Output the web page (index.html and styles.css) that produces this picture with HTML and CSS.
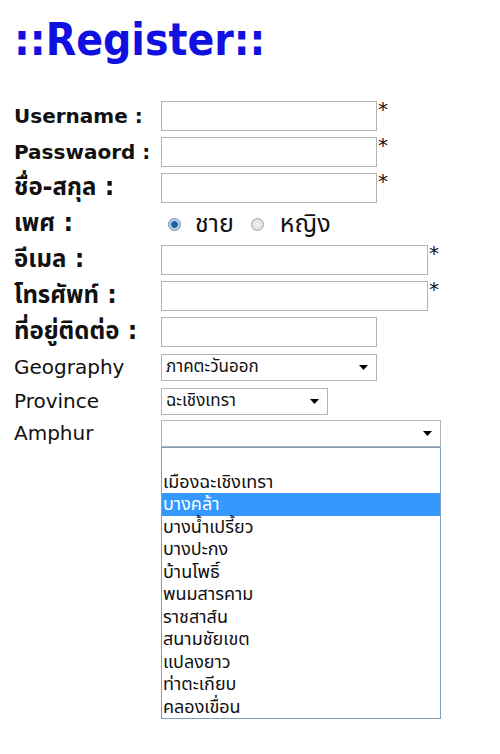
FILE: index.html
```html
<!DOCTYPE html>
<html lang="th">
<head>
  <meta charset="UTF-8">
  <meta name="viewport" content="width=device-width, initial-scale=1.0">
  <title>Register</title>
  <link rel="stylesheet" href="styles.css">
</head>
<body>
  <h1 class="title">::Register::</h1>

  <form class="register">
    <div class="row">
      <label class="label">Username :</label>
      <div class="field"><input type="text" class="text"><span class="req">*</span></div>
    </div>
    <div class="row">
      <label class="label">Passwaord :</label>
      <div class="field"><input type="password" class="text"><span class="req">*</span></div>
    </div>
    <div class="row">
      <label class="label thai">ชื่อ-สกุล :</label>
      <div class="field"><input type="text" class="text"><span class="req">*</span></div>
    </div>
    <div class="row">
      <label class="label thai">เพศ :</label>
      <div class="field radios">
        <input type="radio" name="sex" class="radio" checked><span class="choice">ชาย</span>
        <input type="radio" name="sex" class="radio"><span class="choice">หญิง</span>
      </div>
    </div>
    <div class="row">
      <label class="label thai">อีเมล :</label>
      <div class="field"><input type="text" class="text wide"><span class="req">*</span></div>
    </div>
    <div class="row">
      <label class="label thai">โทรศัพท์ :</label>
      <div class="field"><input type="text" class="text wide"><span class="req">*</span></div>
    </div>
    <div class="row">
      <label class="label thai">ที่อยู่ติดต่อ :</label>
      <div class="field"><input type="text" class="text"></div>
    </div>
    <div class="row short">
      <label class="label plain">Geography</label>
      <div class="field">
        <div class="select geo"><span>ภาคตะวันออก</span><svg class="arrow" width="9" height="5" viewBox="0 0 9 5"><path d="M0 0h9L4.5 5z"/></svg></div>
      </div>
    </div>
    <div class="row short">
      <label class="label plain">Province</label>
      <div class="field">
        <div class="select province"><span>ฉะเชิงเทรา</span><svg class="arrow" width="9" height="5" viewBox="0 0 9 5"><path d="M0 0h9L4.5 5z"/></svg></div>
      </div>
    </div>
    <div class="row dropdown">
      <label class="label plain">Amphur</label>
      <div class="field stack">
        <div class="select amphur"><span></span><svg class="arrow" width="9" height="5" viewBox="0 0 9 5"><path d="M0 0h9L4.5 5z"/></svg></div>
        <ul class="options">
          <li>&nbsp;</li>
          <li>เมืองฉะเชิงเทรา</li>
          <li class="selected">บางคล้า</li>
          <li>บางน้ำเปรี้ยว</li>
          <li>บางปะกง</li>
          <li>บ้านโพธิ์</li>
          <li>พนมสารคาม</li>
          <li>ราชสาส์น</li>
          <li>สนามชัยเขต</li>
          <li>แปลงยาว</li>
          <li>ท่าตะเกียบ</li>
          <li>คลองเขื่อน</li>
        </ul>
      </div>
    </div>
  </form>
</body>
</html>
```

FILE: styles.css
```css
/* General */
body {
  margin: 0;
  padding: 0 0 0 14px;
  background: #fff;
  color: #111;
  font-family: 'DejaVu Sans', 'Noto Sans Thai', sans-serif;
}

.title {
  margin: 14px 0 33px;
  font-family: 'DejaVu Sans Condensed', 'DejaVu Sans', sans-serif;
  font-stretch: condensed;
  font-size: 44px;
  font-weight: bold;
  color: #1010e0;
}

/* Form rows */
.row {
  display: flex;
  align-items: center;
  height: 36px;
}

.row.short {
  height: 34px;
}

.row.dropdown {
  height: auto;
  align-items: flex-start;
  padding-top: 2px;
}

.label {
  width: 147px;
  font-size: 20px;
  font-weight: bold;
}

.label.thai {
  font-size: 24px;
}

.label.plain {
  font-weight: normal;
}

.dropdown .label {
  line-height: 27px;
}

.field {
  display: flex;
  align-items: flex-start;
}

.field.stack {
  flex-direction: column;
}

/* Text inputs */
.text {
  box-sizing: border-box;
  width: 216px;
  height: 30px;
  margin: 0;
  border: 1px solid #b4b4b4;
  background: #fff;
}

.text.wide {
  width: 267px;
}

.req {
  margin: -2px 0 0 1px;
  font-size: 20px;
  line-height: 1;
}

/* Radio buttons */
.radios {
  align-items: center;
  padding-left: 7px;
  font-size: 25px;
}

.radio {
  appearance: none;
  width: 13px;
  height: 13px;
  margin: 0 14px 0 0;
  border: 1px solid #9aa3ad;
  border-radius: 50%;
  background: radial-gradient(circle, #f4f4f4 0%, #d6d6d6 100%);
}

.radio:checked {
  border-color: #6c8ca8;
  background: radial-gradient(circle, #1f5f99 0 3px, #9fc4e6 3.5px, #e8f1f9 100%);
}

.choice {
  margin-right: 17px;
}

.radio + .choice:last-child {
  margin-left: 2px;
}

/* Dropdowns */
.select {
  box-sizing: border-box;
  display: flex;
  align-items: center;
  justify-content: space-between;
  height: 27px;
  padding: 0 8px 0 4px;
  border: 1px solid #b4b4b4;
  background: #fff;
  font-size: 17px;
}

.select.geo {
  width: 216px;
}

.select.province {
  width: 167px;
}

.select.amphur {
  width: 280px;
}

.arrow {
  flex: none;
}

.options {
  box-sizing: border-box;
  width: 280px;
  margin: 0;
  padding: 0;
  list-style: none;
  border: 1px solid #7f9db9;
  background: #fff;
  font-size: 18px;
}

.options li {
  height: 22.5px;
  line-height: 22.5px;
  padding-left: 1px;
  white-space: nowrap;
}

.options li.selected {
  background: #3399ff;
  color: #fff;
}
```
